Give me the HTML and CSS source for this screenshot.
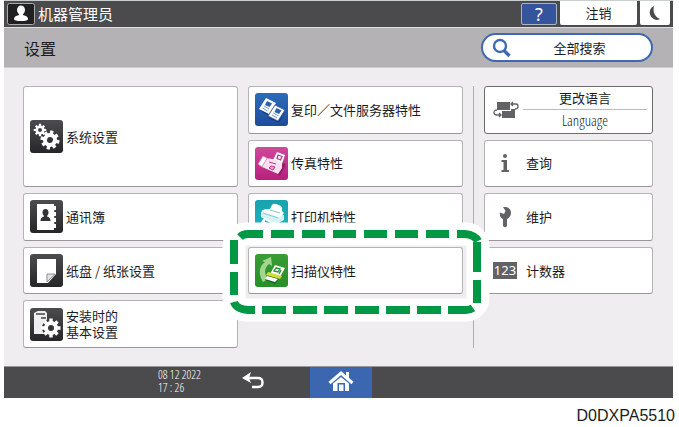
FILE: index.html
```html
<!DOCTYPE html>
<html lang="zh-CN">
<head>
<meta charset="utf-8">
<meta name="viewport" content="width=device-width, initial-scale=1">
<title>设置</title>
<link rel="stylesheet" href="styles.css">
</head>
<body>
<svg class="defs" width="0" height="0" aria-hidden="true">
  <defs>
    <linearGradient id="dark" x1="0" y1="0" x2="0" y2="1"><stop offset="0" stop-color="#4c4c4e"/><stop offset="1" stop-color="#262628"/></linearGradient>
    <linearGradient id="blue" x1="0" y1="0" x2="0" y2="1"><stop offset="0" stop-color="#2c6cb8"/><stop offset="1" stop-color="#1e4b9c"/></linearGradient>
    <linearGradient id="pink" x1="0" y1="0" x2="0" y2="1"><stop offset="0" stop-color="#d0489c"/><stop offset="1" stop-color="#b8207e"/></linearGradient>
    <linearGradient id="teal" x1="0" y1="0" x2="0" y2="1"><stop offset="0" stop-color="#17a2ae"/><stop offset="1" stop-color="#25b4c0"/></linearGradient>
    <linearGradient id="green" x1="0" y1="0" x2="0" y2="1"><stop offset="0" stop-color="#3a9c34"/><stop offset="1" stop-color="#258f28"/></linearGradient>
    <g id="gear">
      <circle r="5" fill="none" stroke="currentColor" stroke-width="4"/>
      <path d="M0-9.500V-5M0 5V9.500M-9.500 0H-5M5 0H9.500M-6.500-6.500L-4-4M4 4L6.500 6.500M-6.500 6.500L-4 4M4-4L6.500-6.500" fill="none" stroke="currentColor" stroke-width="3.400"/>
    </g>
  </defs>
</svg>

<div class="device">
  <header class="topbar">
    <span class="user-badge">
      <svg width="28" height="22" viewBox="0 0 28 22" aria-hidden="true"><rect x=".5" y=".5" width="27" height="21" rx="2" fill="#202022" stroke="#aaaaac"/><ellipse cx="14" cy="7" rx="4" ry="4.500" fill="#fff"/><path d="M12 10h4v2q5 1 5 4q0 2-7 2t-7-2q0-3 5-4z" fill="#fff"/></svg>
    </span>
    <span class="user-name">机器管理员</span>
    <button class="help" type="button">?</button>
    <button class="logout" type="button">注销</button>
    <button class="sleep" type="button" aria-label="睡眠">
      <svg width="14" height="16" viewBox="0 0 14 16" aria-hidden="true"><path d="M6 1C1 3 0 10 5 13.500Q8 16 12 14C7 12 4.500 7 6 1z" fill="#4b4b4d"/></svg>
    </button>
  </header>

  <div class="titlebar">
    <h1>设置</h1>
    <button class="search" type="button">
      <svg width="20" height="20" viewBox="0 0 20 20" aria-hidden="true"><circle cx="8" cy="8" r="6" fill="none" stroke="#3f69b0" stroke-width="2.400"/><path d="M12 12.500L17.500 18" stroke="#3f69b0" stroke-width="3.400"/></svg>
      <span>全部搜索</span>
    </button>
  </div>

  <main class="content">
    <div class="settings">
      <div class="column">
        <button class="card tall" type="button">
          <svg class="tile" viewBox="0 0 33 33" aria-hidden="true"><rect width="33" height="33" rx="3" fill="url(#dark)"/><g color="#fff"><use href="#gear" transform="translate(10 10) scale(.66)"/><use href="#gear" transform="translate(20 20) rotate(12)"/></g></svg>
          <span>系统设置</span>
        </button>
        <button class="card" type="button">
          <svg class="tile" viewBox="0 0 33 33" aria-hidden="true"><rect width="33" height="33" rx="3" fill="url(#dark)"/><path d="M7 4H24V6H26V10H25V12H26V16H25V18H26V22H25V24H26V28H24V30H7z" fill="#fff"/><path d="M24 11h3M24 17h3M24 23h3" stroke="#39393b" stroke-width="1.500"/><ellipse cx="15.500" cy="12.500" rx="3" ry="3.500" fill="#333335"/><path d="M14 15h3v1.500q3.500.5 3.500 4.500h-10q0-4 3.500-4.500z" fill="#333335"/></svg>
          <span>通讯簿</span>
        </button>
        <button class="card" type="button">
          <svg class="tile" viewBox="0 0 33 33" aria-hidden="true"><rect width="33" height="33" rx="3" fill="url(#dark)"/><path d="M7 5H26V20L18 29H7z" fill="#fff"/><path d="M17 28V20H25z" fill="#e2e2e4" stroke="#909092"/></svg>
          <span>纸盘 / 纸张设置</span>
        </button>
        <button class="card" type="button">
          <svg class="tile" viewBox="0 0 33 33" aria-hidden="true"><rect width="33" height="33" rx="3" fill="url(#dark)"/><path d="M4 5L8 3H15L17 5V26H4z" fill="#eee"/><path d="M6 6H15M11 10H16" stroke="#444446" stroke-width="1.500"/><circle cx="21" cy="20" r="9" fill="#353537"/><g color="#fff"><use href="#gear" transform="translate(21 20)"/></g></svg>
          <span>安装时的<br>基本设置</span>
        </button>
      </div>
      <div class="column">
        <button class="card" type="button">
          <svg class="tile" viewBox="0 0 33 33" aria-hidden="true"><rect width="33" height="33" rx="3" fill="url(#blue)"/><path d="M12 6L20 11L14 23L6 18z" fill="#173c78"/><path d="M11 5L21 10L14 21L4 16z" fill="#fff"/><path d="M12 8L17 10.500L14.500 14L10 12z" fill="#2a5fab"/><path d="M9 13L14 16M7.500 15L12.500 18" stroke="#6b93cc"/><path d="M21 14L30 18L24 30L13 25z" fill="#173c78"/><path d="M20 12L30 17L23 28L13 23z" fill="#fff" stroke="#2459a6" stroke-width=".8"/><path d="M21.500 15L26.500 17.500L24 21L19.500 19z" fill="#2a5fab"/><path d="M18.500 20L23.500 23M17 22L22 25" stroke="#6b93cc"/></svg>
          <span>复印／文件服务器特性</span>
        </button>
        <button class="card" type="button">
          <svg class="tile" viewBox="0 0 33 33" aria-hidden="true"><rect width="33" height="33" rx="3" fill="url(#pink)"/><path d="M9 21L25 29L31 18L25 12z" fill="#96206b"/><path d="M22 5L30 8L27 17L18 13z" fill="#fff"/><path d="M23 8L27 9.500L25.500 13L22 11.500z" fill="none" stroke="#b93a8b" stroke-width="1.300"/><path d="M10 11L18 12L27 16V21L23 27L7 20z" fill="#f9e1f0"/><path d="M8 9L12 11L7 20L3 17z" fill="#fff" stroke="#d578b4" stroke-width=".8"/><path d="M14 15L21 17M16 19L20 20L18 23L14 21z" fill="#edaad3" stroke="#b93a8b"/></svg>
          <span>传真特性</span>
        </button>
        <button class="card" type="button">
          <svg class="tile" viewBox="0 0 33 33" aria-hidden="true"><rect width="33" height="33" rx="3" fill="url(#teal)"/><path d="M6 12L10 9L29 15V20L20 25L6 17z" fill="#d6f0f3"/><path d="M17 5Q18 3 21 4L26 6Q28 8 27 11L29 13L25 17L9 13L7 10L15 9z" fill="#fff"/><path d="M15 10L25 13M8 13L23 18" stroke="#82cbd3"/><path d="M9 18L18 22L14 29L4 25z" fill="#fff"/><path d="M10 21L14 23L12 26" fill="none" stroke="#2caab5" stroke-width="1.500"/></svg>
          <span>打印机特性</span>
        </button>
        <div class="highlighted">
          <button class="card" type="button">
            <svg class="tile" viewBox="0 0 33 33" aria-hidden="true"><rect width="33" height="33" rx="3" fill="url(#green)"/><path d="M8 28C3 20 4 12 10 8L7 7L16 3L17 12L14 10C9 14 9 20 13 25z" fill="#a4d58e"/><path d="M14 19L25 24L20 30L10 26z" fill="#176a20"/><path d="M20 11L30 14L25 23L15 20z" fill="#fff"/><path d="M21 14L25 15L23 18L19 17zM26 16L24 20" fill="none" stroke="#299133" stroke-width="1.300"/><path d="M13 18L27 22L25 25L11 21z" fill="#d5dc32"/><path d="M12 22L23 25L20 28L10 25z" fill="#fff"/></svg>
            <span>扫描仪特性</span>
          </button>
          <svg class="marker" viewBox="222 222 268 100" preserveAspectRatio="none" aria-hidden="true">
            <rect x="234" y="234" width="244" height="76" rx="12" fill="none" stroke="#fff" stroke-width="23"/>
            <path fill="none" stroke="#009844" stroke-width="8" d="M240 237Q243 234 248 234H263M271 234H294M302 234H325M333 234H356M364 234H387M395 234H418M426 234H449M457 234H465Q475 235 478 241M477 242V272M477 280V303M473 308Q470 310 466 310H448M441 310H417M410 310H386M379 310H355M348 310H324M317 310H293M286 310H262M255 310H248Q236 309 234 302M234 295V272M234 264V240"/>
          </svg>
        </div>
      </div>
    </div>

    <aside class="tools">
      <button class="tool language" type="button">
        <svg width="26" height="18" viewBox="0 0 26 18" aria-hidden="true"><path d="M4 1H17V9H4z" fill="#626264"/><path d="M10 10H18V8H22V17H9V10z" fill="#626264"/><path d="M18 3H23Q25 3 25 5.500T22 8M20 1L18 3L20 5M4 9Q1 9 1 11.500T4 14H8M6 12L8 14L6 16" fill="none" stroke="#626264" stroke-width="1.300"/></svg>
        <span class="languages"><span class="current">更改语言</span><span class="latin">Language</span></span>
      </button>
      <button class="tool" type="button">
        <svg width="26" height="22" viewBox="0 0 26 22" aria-hidden="true"><circle cx="12" cy="4" r="2" fill="#626264"/><path d="M8.500 8H14V18H16V20H8.500V18H10.500V10H8.500z" fill="#626264"/></svg>
        <span>查询</span>
      </button>
      <button class="tool" type="button">
        <svg width="26" height="22" viewBox="0 0 26 22" aria-hidden="true"><path d="M10 1L12.500 5L11 8L7 6.500Q6 11 10 13V20Q12 22.500 14 20V13Q18 11 18 7Q18 2 13 1z" fill="#626264"/></svg>
        <span>维护</span>
      </button>
      <button class="tool" type="button">
        <span class="digits">123</span>
        <span>计数器</span>
      </button>
    </aside>
  </main>

  <footer class="bottombar">
    <time datetime="2022-12-08T17:26">08 12 2022<br>17 : 26</time>
    <button class="back" type="button" aria-label="返回">
      <svg width="22" height="18" viewBox="0 0 22 18" aria-hidden="true"><path d="M3 6H16Q20.500 6 20.500 10.500T16 15H10" fill="none" stroke="#fff" stroke-width="2.400"/><path d="M0 6L9 0L7 6L9 11z" fill="#fff"/></svg>
    </button>
    <button class="home" type="button" aria-label="主页">
      <svg width="26" height="22" viewBox="0 0 26 22" aria-hidden="true"><path d="M1.500 12L13 2L24.500 12" fill="none" stroke="#fff" stroke-width="3"/><path d="M18 1H21V8L18 5z" fill="#fff"/><path d="M5 12.500L13 6L21 12.500V20H17V12H9.500V20H5z" fill="#fff"/><path d="M11 13.500H15.500V20H11z" fill="#fff"/></svg>
    </button>
  </footer>
</div>
<p class="figure-id">D0DXPA5510</p>
</body>
</html>
```
FILE: styles.css
```css
* {
  box-sizing: border-box;
}

body {
  margin: 0;
  background: #fff;
  color: #1c1c1e;
  font: 13px/16px "Noto Sans CJK SC", sans-serif;
}

button {
  margin: 0;
  padding: 0;
  border: 0;
  background: #fff;
  color: inherit;
  font: inherit;
}

svg {
  display: block;
  flex: none;
}

.defs {
  position: absolute;
}

.device {
  margin: 0 6px 0 4px;
  background: #efedf0;
}

.topbar {
  display: flex;
  align-items: center;
  gap: 3px;
  height: 28px;
  padding: 0 3px;
  border-top: 1px solid #c9cfcf;
  border-bottom: 1px solid #dededf;
  background: #4b4b4d;
}

.user-name {
  flex: 1;
  color: #fff;
  font-size: 15px;
}

.help {
  width: 36px;
  height: 22px;
  border: 1px solid #a9b3c8;
  border-radius: 2px;
  background: #34549b;
  color: #fff;
  font: 18px/20px "Noto Sans", sans-serif;
}

.logout,
.sleep {
  align-self: flex-start;
  height: 24px;
  border-radius: 0 0 2px 2px;
}

.logout {
  width: 77px;
}

.sleep {
  display: flex;
  align-items: center;
  justify-content: center;
  width: 30px;
}

.titlebar {
  display: flex;
  align-items: center;
  justify-content: space-between;
  height: 40px;
  padding: 0 20px;
  border-bottom: 1px solid #d0ced1;
  background: #b4b2b5;
}

h1 {
  margin: 0;
  font-size: 16px;
  font-weight: 400;
}

.search {
  display: flex;
  align-items: center;
  width: 172px;
  height: 29px;
  padding: 0 4px 0 9px;
  border: 2px solid #3f69b0;
  border-radius: 15px;
}

.search span {
  flex: 1;
  text-align: center;
}

.content {
  display: grid;
  grid-template-columns: 440fr 180fr;
  gap: 10px;
  padding: 18px 20px 18px 19px;
}

.settings {
  display: grid;
  grid-template-columns: 1fr 1fr;
  gap: 10px;
}

.column,
.tools {
  display: grid;
  grid-template-rows: repeat(5, 1fr);
  gap: 6px;
  min-height: 262px;
}

.card,
.tool {
  display: flex;
  align-items: center;
  width: 100%;
  height: 100%;
  border: 1px solid #b5b3b6;
  border-bottom-color: #98969a;
  border-radius: 3px;
  text-align: left;
}

.card {
  gap: 3px;
  padding-left: 6px;
}

.tall {
  grid-row: span 2;
}

.tile {
  width: 33px;
  height: 33px;
}

.highlighted {
  position: relative;
}

.marker {
  position: absolute;
  top: -25px;
  left: -26px;
  width: calc(100% + 53px);
  height: 100px;
  pointer-events: none;
}

.tools {
  padding-left: 10px;
  border-left: 1px solid #b0aeb1;
}

.tool {
  gap: 7px;
  padding-left: 8px;
}

.language {
  gap: 4px;
  padding-right: 5px;
  border: 1px solid #6c6c6e;
}

.languages {
  display: grid;
  flex: 1;
  text-align: center;
}

.languages span {
  height: 22px;
  line-height: 20px;
}

.current {
  border-bottom: 1px solid #bcbcbe;
}

.latin,
time {
  font-family: "Open Sans Condensed Light", "Open Sans Condensed", "Liberation Sans", sans-serif;
  font-weight: 300;
}

.latin {
  font-size: 15px;
}

.digits {
  width: 24px;
  margin-right: 2px;
  background: #626264;
  color: #fff;
  font: 13px/17px "Noto Sans", sans-serif;
  text-align: center;
}

.bottombar {
  display: flex;
  align-items: center;
  height: 32px;
  padding-left: 154px;
  border-top: 1px solid #98969a;
  background: #4b4b4d;
}

time {
  width: 84px;
  padding-bottom: 4px;
  color: #fff;
  font-size: 12px;
  line-height: 13px;
}

.back {
  width: 68px;
  padding-bottom: 4px;
  background: none;
}

.home {
  display: flex;
  align-items: center;
  justify-content: center;
  align-self: stretch;
  width: 62px;
  padding-bottom: 2px;
  background: #3b66b0;
}

.figure-id {
  margin: 8px 4px 0;
  font: 16px/20px "Liberation Sans", sans-serif;
  text-align: right;
}
```
